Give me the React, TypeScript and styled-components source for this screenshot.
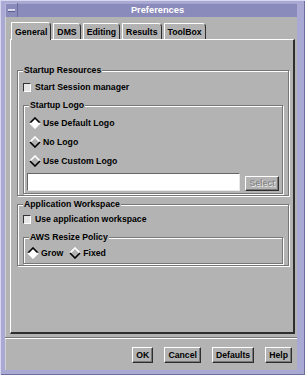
import React from 'react'
import styled, { createGlobalStyle } from 'styled-components'

const GlobalStyle = createGlobalStyle`
    html, body {
        margin: 0;
        padding: 0;
        background: #a9a9d3;
    }
    body {
        font-family: 'Liberation Sans', Arial, Helvetica, sans-serif;
        font-weight: bold;
        font-size: 8.7px;
        color: #000;
    }
`

const GRAY = '#b3b3b3'
const DARK = '#2e2e2e'
const SHADE = '#777777'

const WindowStyled = styled.div`
    box-sizing: border-box;
    width: 305px;
    height: 375px;
    padding: 3px 8px 5px 5px;
    display: flex;
    flex-direction: column;
    background: #a9a9d3;
    box-shadow: inset 1px 1px 0 #d6d6ef, inset -1px -1px 0 #6e6e9a;
`
const TitleBarStyled = styled.div`
    display: flex;
    height: 14px;
    background: #8b8bbb;
    box-shadow: inset 0 1px 0 #a4a4cf;
`
const MinButtonStyled = styled.div`
    box-sizing: border-box;
    width: 13px;
    height: 14px;
    display: flex;
    align-items: center;
    justify-content: center;
    border-right: 1px solid #6e6e9a;
    box-shadow: inset 1px 1px 0 #b4b4dc;

    & span {
        width: 7px;
        height: 2px;
        background: #d8d8ee;
        box-shadow: 0 1px 0 #5c5c88;
    }
`
const TitleTextStyled = styled.div`
    flex: 1;
    text-align: center;
    line-height: 14px;
    font-size: 9.3px;
    color: #fff;
`
const BodyStyled = styled.div`
    flex: 1;
    display: flex;
    flex-direction: column;
    padding: 5px 2px 0 5px;
    background: ${GRAY};
    box-shadow: inset 1px 0 0 #d0d0d0;
`
const TabRowStyled = styled.div`
    display: flex;
    align-items: flex-end;
    gap: 2px;
    height: 17px;
    padding-left: 1px;
`
const TabStyled = styled.div<{ $active?: boolean }>`
    box-sizing: border-box;
    height: ${(p) => (p.$active ? 18 : 16)}px;
    margin-bottom: ${(p) => (p.$active ? -1 : 0)}px;
    padding: 0 3px;
    display: flex;
    align-items: center;
    background: ${GRAY};
    border-left: 1px solid #fff;
    border-top: 1px solid #fff;
    border-right: 1px solid ${DARK};
    border-top-right-radius: 4px;
    position: relative;
    z-index: ${(p) => (p.$active ? 1 : 0)};
`
const PanelStyled = styled.div`
    box-sizing: border-box;
    height: 295px;
    padding: 25px 4px 0 6px;
    border-top: 1px solid #fff;
    border-left: 1px solid #fff;
    border-right: 2px solid ${DARK};
    border-bottom: 2px solid ${DARK};
`
const GroupStyled = styled.fieldset<{ $pad: string; $top?: number }>`
    margin: ${(p) => p.$top || 0}px 0 0 0;
    min-width: 0;
    padding: ${(p) => p.$pad};
    border: 1px solid ${SHADE};
    box-shadow: inset 1px 1px 0 #fff, 1px 1px 0 #fff;
`
const LegendStyled = styled.legend<{ $shift?: number }>`
    padding: 0 1px;
    margin-left: ${(p) => p.$shift || 0}px;
    line-height: 11px;
    background: ${GRAY};
`
const RowStyled = styled.div<{ $h: number; $indent?: number; $gap?: number }>`
    display: flex;
    align-items: center;
    height: ${(p) => p.$h}px;
    padding-left: ${(p) => p.$indent || 0}px;
    gap: ${(p) => p.$gap || 2}px;
`
const CheckBoxStyled = styled.span`
    box-sizing: border-box;
    width: 8px;
    height: 9px;
    margin-right: 2px;
    border: 1px solid;
    border-color: #333 #fff #fff #333;
    background: #e6e6e6;
`
const OptionStyled = styled.span`
    display: inline-flex;
    align-items: center;
    gap: 2px;
`
const FieldRowStyled = styled.div`
    display: flex;
    align-items: flex-end;
    gap: 5px;
    margin-top: 3px;
`
const TextFieldStyled = styled.div`
    box-sizing: border-box;
    flex: 1;
    height: 18px;
    background: #fff;
    border: 1px solid;
    border-color: #666 #e8e8e8 #e8e8e8 #666;
`
const ButtonStyled = styled.button<{ $disabled?: boolean }>`
    box-sizing: border-box;
    height: ${(p) => (p.$disabled ? 15 : 16)}px;
    padding: 0 3px;
    font-family: inherit;
    font-weight: bold;
    font-size: 8.7px;
    line-height: 1;
    color: ${(p) => (p.$disabled ? '#8a8a8a' : '#000')};
    text-shadow: ${(p) => (p.$disabled ? '1px 1px 0 #e4e4e4' : 'none')};
    background: ${GRAY};
    border: 1px solid;
    border-color: #fff ${DARK} ${DARK} #fff;
    box-shadow: inset -1px -1px 0 ${SHADE};
    border-radius: 0;
`
const SeparatorStyled = styled.div`
    margin-top: 3px;
    height: 0;
    border-top: 1px solid ${SHADE};
    border-bottom: 1px solid #fff;
    margin-left: -5px;
    margin-right: -2px;
`
const ButtonRowStyled = styled.div`
    display: flex;
    justify-content: flex-end;
    gap: 11px;
    padding: 8px 3px 0 0;
`

const Diamond = ({ on }: { on?: boolean }) => (
    <svg width="12" height="12" viewBox="0 0 12 12">
        <polygon points="6,1 11,6 6,11 1,6" fill={on ? '#fff' : GRAY} />
        <polyline points="1,6 6,1 11,6" fill="none" stroke={on ? '#000' : '#fff'} strokeWidth="1.6" />
        <polyline points="1,6 6,11 11,6" fill="none" stroke={on ? '#fff' : '#000'} strokeWidth="1.6" />
    </svg>
)

const Radio = ({ label, on }: { label: string; on?: boolean }) => (
    <OptionStyled>
        <Diamond on={on} />
        {label}
    </OptionStyled>
)

const tabs = ['General', 'DMS', 'Editing', 'Results', 'ToolBox']

const App = () => {
    return (
        <>
            <GlobalStyle />
            <WindowStyled>
                <TitleBarStyled>
                    <MinButtonStyled>
                        <span />
                    </MinButtonStyled>
                    <TitleTextStyled>Preferences</TitleTextStyled>
                </TitleBarStyled>
                <BodyStyled>
                    <TabRowStyled>
                        {tabs.map((t, i) => (
                            <TabStyled key={t} $active={i === 0}>
                                {t}
                            </TabStyled>
                        ))}
                    </TabRowStyled>
                    <PanelStyled>
                        <GroupStyled $pad="2px 5px 1px 5px">
                            <LegendStyled>Startup Resources</LegendStyled>
                            <RowStyled $h={18} $gap={2}>
                                <CheckBoxStyled />
                                Start Session manager
                            </RowStyled>
                            <GroupStyled $pad="2px 3px 2px 3px" $top={4}>
                                <LegendStyled $shift={2}>Startup Logo</LegendStyled>
                                <RowStyled $h={19} $indent={2}>
                                    <Radio label="Use Default Logo" on />
                                </RowStyled>
                                <RowStyled $h={19} $indent={2}>
                                    <Radio label="No Logo" />
                                </RowStyled>
                                <RowStyled $h={19} $indent={2}>
                                    <Radio label="Use Custom Logo" />
                                </RowStyled>
                                <FieldRowStyled>
                                    <TextFieldStyled />
                                    <ButtonStyled $disabled>Select</ButtonStyled>
                                </FieldRowStyled>
                            </GroupStyled>
                        </GroupStyled>

                        <GroupStyled $pad="0 5px 1px 5px" $top={3}>
                            <LegendStyled>Application Workspace</LegendStyled>
                            <RowStyled $h={18} $gap={2}>
                                <CheckBoxStyled />
                                Use application workspace
                            </RowStyled>
                            <GroupStyled $pad="2px 3px 2px 3px" $top={4}>
                                <LegendStyled $shift={2}>AWS Resize Policy</LegendStyled>
                                <RowStyled $h={16} $gap={6}>
                                    <Radio label="Grow" on />
                                    <Radio label="Fixed" />
                                </RowStyled>
                            </GroupStyled>
                        </GroupStyled>
                    </PanelStyled>
                    <SeparatorStyled />
                    <ButtonRowStyled>
                        <ButtonStyled>OK</ButtonStyled>
                        <ButtonStyled>Cancel</ButtonStyled>
                        <ButtonStyled>Defaults</ButtonStyled>
                        <ButtonStyled>Help</ButtonStyled>
                    </ButtonRowStyled>
                </BodyStyled>
            </WindowStyled>
        </>
    )
}

export default App
